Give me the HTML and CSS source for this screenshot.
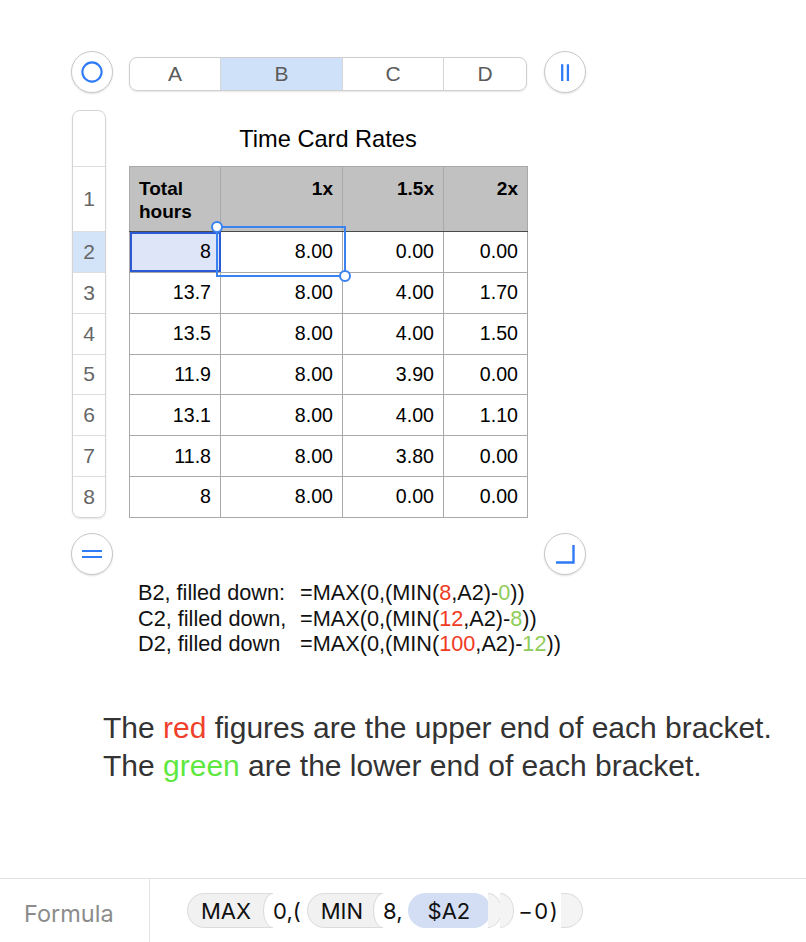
FILE: index.html
```html
<!DOCTYPE html>
<html lang="en">
<head>
    <meta charset="UTF-8">
    <meta name="viewport" content="width=device-width, initial-scale=1.0">
    <title>Time Card Rates</title>
    <link rel="stylesheet" href="styles.css">
</head>
<body>
<div class="page">
    <div class="sheet">
        <div class="col-bar-row">
            <button class="round-btn" aria-label="Select table">
                <svg width="40" height="40" viewBox="0 0 40 40"><circle cx="20" cy="20" r="9.6" fill="none" stroke="#2f7bf5" stroke-width="2.1"/></svg>
            </button>
            <div class="col-bar">
                <div class="col-head">A</div>
                <div class="col-head is-sel">B</div>
                <div class="col-head">C</div>
                <div class="col-head">D</div>
            </div>
            <button class="round-btn" aria-label="Add column">
                <svg width="40" height="40" viewBox="0 0 40 40"><path d="M17.2 12.3V29M22.9 12.3V29" stroke="#2f7bf5" stroke-width="2.3" fill="none"/></svg>
            </button>
        </div>

        <div class="grid-row">
            <div class="row-heads">
                <div class="rh rh-blank"></div>
                <div class="rh rh-first">1</div>
                <div class="rh is-sel">2</div>
                <div class="rh">3</div>
                <div class="rh">4</div>
                <div class="rh">5</div>
                <div class="rh">6</div>
                <div class="rh">7</div>
                <div class="rh">8</div>
            </div>

            <div class="table-wrap">
                <div class="table-title">Time Card Rates</div>
                <table class="rates">
                    <colgroup>
                        <col class="c-a"><col class="c-b"><col class="c-c"><col class="c-d">
                    </colgroup>
                    <thead>
                        <tr><th>Total hours</th><th>1x</th><th>1.5x</th><th>2x</th></tr>
                    </thead>
                    <tbody>
                        <tr><td class="is-sel">8</td><td>8.00</td><td>0.00</td><td>0.00</td></tr>
                        <tr><td>13.7</td><td>8.00</td><td>4.00</td><td>1.70</td></tr>
                        <tr><td>13.5</td><td>8.00</td><td>4.00</td><td>1.50</td></tr>
                        <tr><td>11.9</td><td>8.00</td><td>3.90</td><td>0.00</td></tr>
                        <tr><td>13.1</td><td>8.00</td><td>4.00</td><td>1.10</td></tr>
                        <tr><td>11.8</td><td>8.00</td><td>3.80</td><td>0.00</td></tr>
                        <tr><td>8</td><td>8.00</td><td>0.00</td><td>0.00</td></tr>
                    </tbody>
                </table>
                <div class="sel-box">
                    <span class="handle handle-tl"></span>
                    <span class="handle handle-br"></span>
                </div>
            </div>
        </div>

        <div class="corner-row">
            <button class="round-btn" aria-label="Add row">
                <svg width="40" height="40" viewBox="0 0 40 40"><path d="M10 17H30M10 23H30" stroke="#2f7bf5" stroke-width="2.2" fill="none"/></svg>
            </button>
            <button class="round-btn" aria-label="Resize table">
                <svg width="40" height="40" viewBox="0 0 40 40"><path d="M11 28.5H28.5V11" stroke="#2f7bf5" stroke-width="2.4" fill="none"/></svg>
            </button>
        </div>
    </div>

    <div class="notes">
        <span>B2, filled down:</span>
        <span>=MAX(0,(MIN(<span class="red">8</span>,A2)-<span class="green">0</span>))</span>
        <span>C2, filled down,</span>
        <span>=MAX(0,(MIN(<span class="red">12</span>,A2)-<span class="green">8</span>))</span>
        <span>D2, filled down</span>
        <span>=MAX(0,(MIN(<span class="red">100</span>,A2)-<span class="green">12</span>))</span>
    </div>

    <p class="explain">
        The <span class="red-big">red</span> figures are the upper end of each bracket.<br>
        The <span class="green-big">green</span> are the lower end of each bracket.
    </p>

    <div class="formula-bar">
        <div class="fb-label">Formula</div>
        <div class="fb-tokens">
            <span class="tok-fn">MAX</span><span class="tok-open"></span><span class="tok-txt">0,(</span><span class="tok-fn tok-min">MIN</span><span class="tok-open"></span><span class="tok-txt">8,</span><span class="tok-ref">$A2</span><span class="tok-close"></span><span class="tok-close tok-close2"></span><span class="tok-txt tok-tail">−0)</span><span class="tok-close tok-last"></span>
        </div>
    </div>
</div>
</body>
</html>
```

FILE: styles.css
```css
body {
    margin: 0;
    font-family: "Liberation Sans", Arial, sans-serif;
    color: #000;
    background: #fff;
}
.page {
    min-height: 100vh;
    display: flex;
    flex-direction: column;
}
.sheet {
    margin: 51px 0 0 71px;
    width: 515px;
}

/* round control buttons */
.round-btn {
    width: 42px;
    height: 42px;
    padding: 0;
    flex: none;
    border-radius: 50%;
    border: 1px solid #c8c8c8;
    background: #fff;
    box-shadow: 0 1px 2px rgba(0, 0, 0, 0.12);
    display: flex;
    align-items: center;
    justify-content: center;
}
.round-btn svg {
    display: block;
}

/* column header bar */
.col-bar-row {
    display: flex;
    align-items: flex-start;
}
.col-bar {
    margin: 6px 17px 0 16px;
    width: 398px;
    height: 34px;
    box-sizing: border-box;
    border: 1px solid #cfcfcf;
    border-radius: 8px;
    overflow: hidden;
    display: grid;
    grid-template-columns: 90px 122px 101px 1fr;
    box-shadow: 0 1px 2px rgba(0, 0, 0, 0.1);
}
.col-head {
    display: flex;
    align-items: center;
    justify-content: center;
    font-size: 21px;
    color: #5b5b5b;
    border-left: 1px solid #d6d6d6;
}
.col-head:first-child {
    border-left: 0;
}
.col-head.is-sel {
    background: #cfe1f8;
}

/* row headers + table */
.grid-row {
    display: flex;
    margin-top: 17px;
}
.row-heads {
    margin-left: 1px;
    width: 34px;
    box-sizing: border-box;
    border: 1px solid #d4d4d4;
    border-radius: 8px;
    overflow: hidden;
    box-shadow: 0 1px 2px rgba(0, 0, 0, 0.1);
    align-self: flex-start;
}
.rh {
    height: 40.85px;
    box-sizing: border-box;
    border-top: 1px solid #dedede;
    display: flex;
    align-items: center;
    justify-content: center;
    font-size: 21px;
    color: #666;
}
.rh-blank {
    height: 55px;
    border-top: 0;
}
.rh-first {
    height: 65px;
}
.rh.is-sel {
    background: #d3e4f9;
}

.table-wrap {
    position: relative;
    margin-left: 23px;
    width: 398px;
}
.table-title {
    height: 56px;
    box-sizing: border-box;
    padding-top: 16px;
    font-size: 23.6px;
    line-height: 27px;
    text-align: center;
}
.rates {
    border-collapse: collapse;
    table-layout: fixed;
    width: 398px;
    font-size: 19.6px;
}
.c-a { width: 91px; }
.c-b { width: 122px; }
.c-c { width: 101px; }
.c-d { width: 84px; }
.rates th,
.rates td {
    border: 1px solid #a9a9a9;
    padding: 0 9px;
    text-align: right;
}
.rates thead tr {
    height: 65px;
}
.rates tbody tr {
    height: 40.85px;
}
.rates th {
    background: #c0c1c0;
    font-size: 19px;
    line-height: 23px;
    font-weight: bold;
    vertical-align: top;
    padding-top: 10px;
    border-bottom-color: #4a4a4a;
}
.rates th:first-child {
    text-align: left;
}
.rates td {
    vertical-align: middle;
}
.rates td.is-sel {
    background: #dfe5f9;
    outline: 2px solid #2c5ad5;
    outline-offset: -2px;
}

/* fill selection over B2 */
.sel-box {
    position: absolute;
    left: 87px;
    top: 116px;
    width: 130px;
    height: 51px;
    box-sizing: border-box;
    border: 2px solid #3b82f1;
}
.handle {
    position: absolute;
    width: 12px;
    height: 12px;
    box-sizing: border-box;
    border: 2px solid #3b82f1;
    border-radius: 50%;
    background: #fff;
}
.handle-tl {
    left: -7px;
    top: -7px;
}
.handle-br {
    left: 121px;
    top: 42px;
}

.corner-row {
    display: flex;
    justify-content: space-between;
    margin-top: 15px;
}

/* formula notes */
.notes {
    margin: 5px 0 0 138px;
    display: grid;
    grid-template-columns: 162px auto;
    font-size: 21.7px;
    line-height: 25.7px;
    color: #111;
}
.red { color: #ef3b24; }
.green { color: #8fcd58; }

.explain {
    margin: 52px 0 0 103px;
    font-size: 30px;
    line-height: 38px;
    color: #333;
}
.red-big { color: #f0402a; }
.green-big { color: #5ee83f; }

/* formula bar */
.formula-bar {
    margin-top: auto;
    height: 63px;
    border-top: 1.5px solid #e3e3e3;
    display: flex;
    font-family: Inter, "Liberation Sans", sans-serif;
    font-size: 22px;
}
.fb-label {
    width: 150px;
    box-sizing: border-box;
    border-right: 1px solid #e3e3e3;
    padding: 6px 0 0 24px;
    display: flex;
    align-items: center;
    font-size: 23.5px;
    color: #8c8c8c;
}
.fb-tokens {
    display: flex;
    align-items: center;
    padding-left: 37px;
    color: #111;
}
.tok-fn {
    height: 35px;
    box-sizing: border-box;
    display: inline-flex;
    align-items: center;
    padding: 0 22px 0 13px;
    background: #f1f1f1;
    border: 1.5px solid #dcdcdc;
    border-right: 0;
    border-radius: 17.5px 0 0 17.5px;
}
.tok-min {
    margin-left: 6px;
    padding-right: 20px;
}
.tok-open {
    position: relative;
    width: 10px;
    height: 35px;
    margin-left: -10px;
    box-sizing: border-box;
    border: 1.5px solid #dcdcdc;
    border-right: 0;
    border-radius: 10px 0 0 10px / 17.5px 0 0 17.5px;
    background: #fff;
}
.tok-txt {
    white-space: pre;
}
.tok-ref {
    margin-left: 5px;
    height: 35px;
    display: inline-flex;
    align-items: center;
    padding: 0 21px 0 20px;
    background: #d3ddf3;
    border-radius: 17.5px;
}
.tok-close {
    position: relative;
    width: 14px;
    height: 35px;
    margin-left: -3px;
    box-sizing: border-box;
    border: 1.5px solid #dcdcdc;
    border-left: 0;
    border-radius: 0 14px 14px 0 / 0 17.5px 17.5px 0;
    background: #f4f4f4;
}
.tok-close2 {
    margin-left: -2px;
}
.tok-tail {
    margin-left: 4px;
    letter-spacing: 1.5px;
}
.tok-last {
    width: 22px;
    margin-left: 2px;
    border-radius: 0 18px 18px 0 / 0 17.5px 17.5px 0;
}
```
